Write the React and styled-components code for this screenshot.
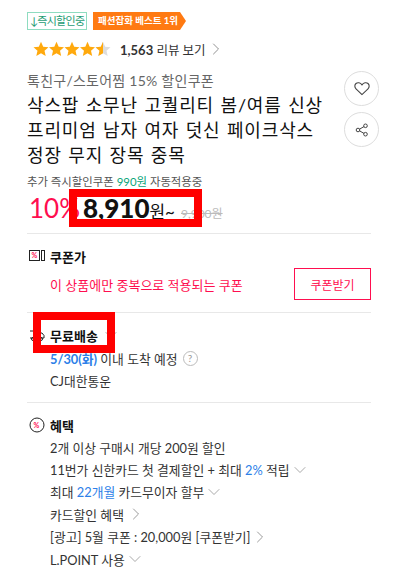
import React from "react"
import styled, { createGlobalStyle } from "styled-components"
import { ChevronRight, ChevronDown } from "lucide-react"

const GlobalStyle = createGlobalStyle`
  html, body {
    margin: 0;
    padding: 0;
    background: #fff;
    overflow: hidden;
  }
  body {
    font-family: Lato, "Noto Sans CJK KR", sans-serif;
    color: #111;
  }
`

const Page = styled.div`
  width: 344px;
  height: 564px;
  padding: 12px 0 0 27px;
`

const Badges = styled.div`
  display: flex;
  gap: 6px;
  height: 18px;
`

const InstantBadge = styled.span`
  box-sizing: border-box;
  width: 60px;
  border: 1px solid #8fdcc0;
  color: #1f9c73;
  font-size: 11px;
  line-height: 16px;
  text-align: center;
  white-space: nowrap;
  letter-spacing: -0.7px;
`

const BestBadge = styled.span`
  width: 93px;
  background: #ff7a12;
  color: #fff;
  font-size: 9.5px;
  font-weight: 700;
  line-height: 18px;
  padding-left: 5px;
  box-sizing: border-box;
  white-space: nowrap;
  clip-path: polygon(0 0, 87px 0, 100% 50%, 87px 100%, 0 100%);
`

const ReviewRow = styled.div`
  display: flex;
  align-items: center;
  height: 18px;
  margin: 10px 0 0 6px;
  color: #333;
`

const Stars = styled.svg`
  width: 78px;
  height: 16px;
  margin-right: 9px;
`

const ReviewText = styled.span`
  font-size: 12.5px;
  b {
    font-weight: 700;
    font-size: 13px;
  }
`

const GreyChevron = styled(ChevronRight)`
  width: 20px;
  height: 20px;
  color: #888;
  stroke-width: 1.1;
`

const TitleRow = styled.div`
  display: flex;
  justify-content: space-between;
  margin-top: 13px;
  width: 352px;
`

const TitleBlock = styled.div`
  width: 305px;
`

const Subtitle = styled.div`
  font-size: 14px;
  line-height: 20px;
  letter-spacing: 0.25px;
  color: #666;
  white-space: nowrap;
`

const Title = styled.h1`
  margin: 2px 0 0;
  font-size: 18px;
  font-weight: 400;
  line-height: 25px;
  letter-spacing: 0.85px;
  word-spacing: 1px;
  color: #111;
  white-space: nowrap;
`

const Actions = styled.div`
  display: flex;
  flex-direction: column;
  gap: 6px;
`

const RoundButton = styled.button`
  box-sizing: border-box;
  width: 35px;
  height: 35px;
  padding: 0;
  border: 1px solid #ddd;
  border-radius: 50%;
  background: #fff;
  display: flex;
  align-items: center;
  justify-content: center;
`

const ExtraCoupon = styled.div`
  margin-top: 6px;
  font-size: 11.4px;
  line-height: 16px;
  color: #555;
  white-space: nowrap;
  em {
    font-style: normal;
    color: #0aa57a;
  }
`

const PriceRow = styled.div`
  position: relative;
  display: flex;
  align-items: baseline;
  height: 41px;
  padding-top: 2px;
  white-space: nowrap;
`

const Discount = styled.span`
  font-size: 26px;
  color: #ff0e4f;
  margin-left: 2px;
  width: 54px;
`

const Price = styled.strong`
  font-size: 26px;
  font-weight: 900;
  color: #111;
`

const Won = styled.span`
  font-size: 17px;
  color: #111;
  margin-right: 6px;
`

const OldPrice = styled.span`
  font-size: 12px;
  color: #bbb;
  text-decoration: line-through;
`

const RedBox = styled.div`
  position: absolute;
  box-sizing: border-box;
  border: 8px solid #f00;
  left: ${props => props.$left}px;
  top: ${props => props.$top}px;
  width: ${props => props.$width}px;
  height: ${props => props.$height}px;
`

const Section = styled.section`
  position: relative;
  border-top: 1px solid #e8e8e8;
  padding-top: 12px;
  height: ${props => props.$height}px;
`

const SectionHead = styled.div`
  display: flex;
  align-items: center;
  height: 20px;
  font-size: 13px;
  font-weight: 700;
  color: #111;
  gap: 5px;
`

const IconSlot = styled.svg`
  width: 16px;
  height: 16px;
  flex: none;
  margin-left: 2px;
`

const SectionBody = styled.div`
  padding-left: 23px;
  padding-top: ${props => props.$top || 0}px;
`

const CouponLine = styled.div`
  display: flex;
  align-items: center;
  justify-content: space-between;
  margin-top: 2px;
  height: 32px;
`

const CouponText = styled.span`
  font-size: 13px;
  color: #ff0e4f;
`

const CouponButton = styled.button`
  box-sizing: border-box;
  width: 77px;
  height: 32px;
  border: 1px solid #ff0e4f;
  border-radius: 0;
  background: #fff;
  color: #ff0e4f;
  font-family: inherit;
  font-size: 12px;
  padding: 0;
`

const InfoLine = styled.div`
  display: flex;
  align-items: center;
  height: ${props => props.$height || 22.4}px;
  font-size: 12.8px;
  color: #333;
  white-space: nowrap;
  b {
    font-weight: 700;
    color: #2d7fe8;
  }
  em {
    font-style: normal;
    color: #2d7fe8;
  }
`

const HelpMark = styled.span`
  box-sizing: border-box;
  width: 15px;
  height: 15px;
  margin-left: 5px;
  border: 1px solid #bbb;
  border-radius: 50%;
  color: #999;
  font-size: 10px;
  line-height: 13px;
  text-align: center;
`

const DownIcon = styled(ChevronDown)`
  width: 20px;
  height: 20px;
  flex: none;
  margin-left: ${props => props.$gap || 0}px;
  color: #999;
  stroke-width: 1;
`

const RightIcon = styled(ChevronRight)`
  width: 20px;
  height: 20px;
  flex: none;
  margin-left: ${props => props.$gap || 0}px;
  color: #888;
  stroke-width: 1;
`

const STAR = "M8 .8l2.2 4.9 5.3.5-4 3.5 1.2 5.2L8 12.2l-4.7 2.7 1.2-5.2-4-3.5 5.3-.5z"

const StarRating = () => (
  <Stars viewBox="0 0 78 16">
    <defs>
      <clipPath id="half">
        <rect x="0" y="0" width="8" height="16" />
      </clipPath>
    </defs>
    {[0, 15.5, 31, 46.5].map(x => (
      <path key={x} d={STAR} fill="#ffa90d" transform={`translate(${x} 0)`} />
    ))}
    <g transform="translate(62 0)">
      <path d={STAR} fill="#ddd" />
      <path d={STAR} fill="#ffa90d" clipPath="url(#half)" />
    </g>
  </Stars>
)

const App = () => (
  <Page>
    <GlobalStyle />
    <Badges>
      <InstantBadge>↓즉시할인중</InstantBadge>
      <BestBadge>패션잡화 베스트 1위</BestBadge>
    </Badges>
    <ReviewRow>
      <StarRating />
      <ReviewText><b>1,563</b> 리뷰 보기</ReviewText>
      <GreyChevron />
    </ReviewRow>
    <TitleRow>
      <TitleBlock>
        <Subtitle>톡친구/스토어찜 15% 할인쿠폰</Subtitle>
        <Title>
          삭스팝 소무난 고퀄리티 봄/여름 신상<br />
          프리미엄 남자 여자 덧신 페이크삭스<br />
          정장 무지 장목 중목
        </Title>
      </TitleBlock>
      <Actions>
        <RoundButton aria-label="찜하기">
          <svg width="16" height="15" viewBox="0 0 16 15" fill="none" stroke="#444" strokeWidth="1.1">
            <path d="M8 13.6 2 7.8C.4 6.2.5 3.8 2 2.5c1.600-1.300 4.200-1 6 1.300 1.800-2.300 4.400-2.600 6-1.300 1.500 1.300 1.600 3.700 0 5.300z" />
          </svg>
        </RoundButton>
        <RoundButton aria-label="공유하기">
          <svg width="14" height="14" viewBox="0 0 14 14" fill="none" stroke="#444" strokeWidth="1">
            <circle cx="3" cy="7" r="1.800" />
            <circle cx="10.500" cy="2.800" r="1.800" />
            <circle cx="10.500" cy="11.200" r="1.800" />
            <path d="M4.600 6.100 9 3.600M4.600 7.900 9 10.400" />
          </svg>
        </RoundButton>
      </Actions>
    </TitleRow>
    <ExtraCoupon>추가 즉시할인쿠폰 <em>990원</em> 자동적용중</ExtraCoupon>
    <PriceRow>
      <Discount>10%</Discount>
      <Price>8,910</Price>
      <Won>원~</Won>
      <OldPrice>9,900원</OldPrice>
      <RedBox $left={42} $top={-1} $width={133} $height={38} />
    </PriceRow>
    <Section $height={66}>
      <SectionHead>
        <IconSlot viewBox="0 0 16 16" fill="none">
          <rect x="0.500" y="2.500" width="10" height="10" stroke="#222" />
          <rect x="12.500" y="2.500" width="3" height="10" stroke="#222" />
          <text x="2.500" y="10" fontSize="7" fontWeight="700" fill="#ff0e4f">%</text>
        </IconSlot>
        쿠폰가
      </SectionHead>
      <SectionBody>
        <CouponLine>
          <CouponText>이 상품에만 중복으로 적용되는 쿠폰</CouponText>
          <CouponButton>쿠폰받기</CouponButton>
        </CouponLine>
      </SectionBody>
    </Section>
    <Section $height={77}>
      <SectionHead>
        <IconSlot viewBox="0 0 16 16" fill="none">
          <path d="M1 4h9v7H1M10 6h3l2 2.500V11h-5" stroke="#222" />
          <circle cx="4" cy="12" r="1.500" stroke="#222" />
          <circle cx="12" cy="12" r="1.500" stroke="#222" />
        </IconSlot>
        무료배송
        <DownIcon $gap={-2} />
      </SectionHead>
      <SectionBody>
        <InfoLine $height={26}><b>5/30(화)</b>&nbsp;이내 도착 예정<HelpMark>?</HelpMark></InfoLine>
        <InfoLine $height={18}>CJ대한통운</InfoLine>
      </SectionBody>
      <RedBox $left={6} $top={-1} $width={82} $height={41} />
    </Section>
    <Section $height={150}>
      <SectionHead>
        <IconSlot viewBox="0 0 16 16" fill="none">
          <circle cx="8" cy="8" r="7" stroke="#222" />
          <text x="4.500" y="10.500" fontSize="7" fontWeight="700" fill="#ff0e4f">%</text>
        </IconSlot>
        혜택
      </SectionHead>
      <SectionBody $top={1}>
        <InfoLine>2개 이상 구매시 개당 200원 할인</InfoLine>
        <InfoLine>11번가 신한카드 첫 결제할인 + 최대&nbsp;<em>2%</em>&nbsp;적립<DownIcon /></InfoLine>
        <InfoLine>최대&nbsp;<em>22개월</em>&nbsp;카드무이자 할부<DownIcon /></InfoLine>
        <InfoLine>카드할인 혜택<RightIcon $gap={2} /></InfoLine>
        <InfoLine>[광고] 5월 쿠폰 : 20,000원 [쿠폰받기]<RightIcon /></InfoLine>
        <InfoLine>L.POINT 사용<DownIcon /></InfoLine>
      </SectionBody>
    </Section>
  </Page>
)

export default App
